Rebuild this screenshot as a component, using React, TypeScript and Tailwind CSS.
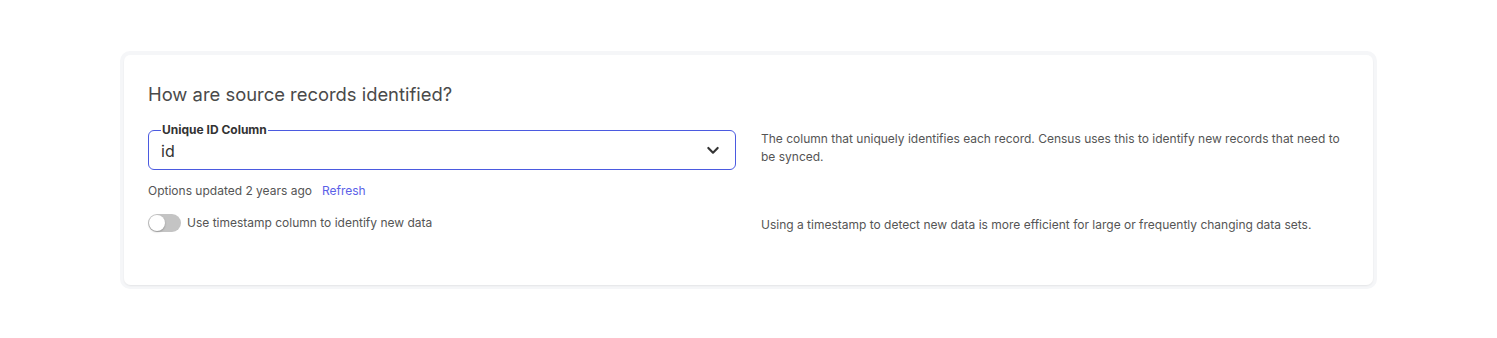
import React from "react";

export default function App() {
  return (
    <div className="w-[1497px] h-[338px] bg-white flex justify-center pt-[51px]" style={{ fontFamily: "Inter, 'Noto Sans', sans-serif" }}>
      <div className="w-[1257px] h-[238px] rounded-[10px] border-4 border-[#f5f6f8]">
        <div className="h-full rounded-[7px] bg-white shadow-[0_1px_2px_rgba(0,0,0,0.07)] px-6 pt-[25px]">
          <h2 className="text-[18.4px] leading-7 text-[#4a4a4a] font-normal">How are source records identified?</h2>
          <div className="grid grid-cols-2 gap-x-[25px] mt-[22px]">
            <div>
              <div className="relative h-10 rounded-md border border-[#4b5ae0] flex items-center pl-3 pr-[14px]">
                <span className="absolute -top-[9px] left-[12px] bg-white px-[1px] text-[12px] leading-4 font-bold text-[#333]">Unique ID Column</span>
                <span className="text-[16px] text-[#333] flex-1 pt-[1px]">id</span>
                <svg width="16" height="16" viewBox="0 0 24 24" fill="none" stroke="#333" strokeWidth="3.2" strokeLinecap="round" strokeLinejoin="round">
                  <path d="M5 9l7 7 7-7" />
                </svg>
              </div>
              <div className="mt-[13px] text-[12px] leading-4 text-[#555]">
                Options updated 2 years ago<span className="ml-[10px] text-[#5b61e8]">Refresh</span>
              </div>
            </div>
            <div className="text-[12px] leading-[18px] text-[#555] pr-2">
              The column that uniquely identifies each record. Census uses this to identify new records that need to be synced.
            </div>
            <div className="mt-[13px] flex items-center gap-[6px]">
              <div className="w-[33px] h-[18px] rounded-full bg-[#c4c4c4] relative">
                <div className="absolute left-[1px] top-[1px] w-4 h-4 rounded-full bg-white shadow-[0_1px_2px_rgba(0,0,0,0.25)]" />
              </div>
              <span className="text-[12px] leading-4 text-[#555]">Use timestamp column to identify new data</span>
            </div>
            <div className="mt-[17px] text-[12px] leading-[18px] text-[#555]">
              Using a timestamp to detect new data is more efficient for large or frequently changing data sets.
            </div>
          </div>
        </div>
      </div>
    </div>
  );
}
